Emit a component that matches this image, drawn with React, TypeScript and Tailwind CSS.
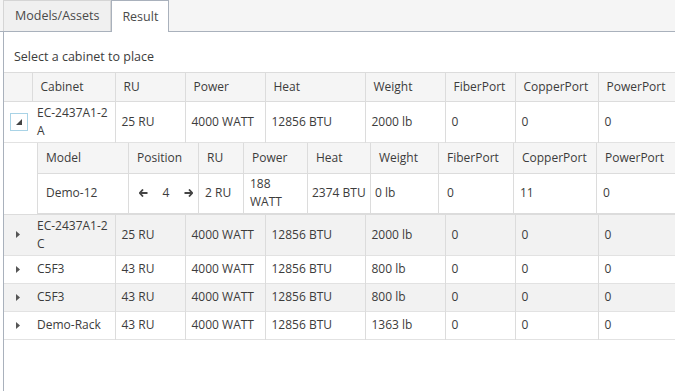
import React from "react";

type Cabinet = {
  name: React.ReactNode;
  ru: string;
  power: string;
  heat: string;
  weight: string;
  expanded?: boolean;
  tall?: boolean;
};

const cabinets: Cabinet[] = [
  { name: <>EC-2437A1-2<br />A</>, ru: "25 RU", power: "4000 WATT", heat: "12856 BTU", weight: "2000 lb", expanded: true, tall: true },
  { name: <>EC-2437A1-2<br />C</>, ru: "25 RU", power: "4000 WATT", heat: "12856 BTU", weight: "2000 lb", tall: true },
  { name: "C5F3", ru: "43 RU", power: "4000 WATT", heat: "12856 BTU", weight: "800 lb" },
  { name: "C5F3", ru: "43 RU", power: "4000 WATT", heat: "12856 BTU", weight: "800 lb" },
  { name: "Demo-Rack", ru: "43 RU", power: "4000 WATT", heat: "12856 BTU", weight: "1363 lb" },
];

const headers = ["Cabinet", "RU", "Power", "Heat", "Weight", "FiberPort", "CopperPort", "PowerPort"];
const nestedHeaders = ["Model", "Position", "RU", "Power", "Heat", "Weight", "FiberPort", "CopperPort", "PowerPort"];

const ArrowLeft = () => (
  <svg width="9" height="8" viewBox="0 0 9 8">
    <path d="M4 0.5 L0.8 4 L4 7.5 M1 4 H8.5" stroke="#444" strokeWidth="1.8" fill="none" />
  </svg>
);

const ArrowRight = () => (
  <svg width="9" height="8" viewBox="0 0 9 8">
    <path d="M5 0.5 L8.2 4 L5 7.5 M8 4 H0.5" stroke="#444" strokeWidth="1.8" fill="none" />
  </svg>
);

// collapse / expand triangles like kendo grid hierarchy cell
const Collapse = () => (
  <span className="flex h-[18px] w-[18px] items-center justify-center border border-[#a9d3e6] bg-white">
    <svg width="6" height="6" viewBox="0 0 6 6">
      <polygon points="6,0 6,6 0,6" fill="#444" />
    </svg>
  </span>
);

const Expand = () => (
  <svg width="4" height="7" viewBox="0 0 4 7">
    <polygon points="0,0 4,3.5 0,7" fill="#555" />
  </svg>
);

const App = () => {
  return (
    <div
      className="h-[391px] w-[675px] overflow-hidden bg-white text-[12px] text-[#3c3c3c]"
      style={{ fontFamily: '"Open Sans", "Noto Sans", sans-serif' }}
    >
      {/* tabs */}
      <div className="flex h-[32px] items-end border-b border-[#a9b1bc] bg-[#f5f5f5] pl-[3px] text-[12.5px]">
        <div className="h-[31px] border border-b-0 border-[#d5d5d5] bg-[#f0f0f0] px-[11px] leading-[30px] text-[#4a4a4a]">
          Models/Assets
        </div>
        <div className="relative -mb-px h-[32px] border border-b-0 border-[#a9b1bc] bg-white px-[10px] leading-[31px] text-[#4a4a4a]">
          Result
        </div>
      </div>

      <div className="ml-[3px] h-full border-l border-[#a9b1bc]">
        <div className="pl-[10px] pt-[16px] pb-[6px] text-[12.5px] leading-[18px]">Select a cabinet to place</div>

        <table className="w-[672px] table-fixed border-collapse">
          <colgroup>
            <col className="w-[28px]" />
            <col className="w-[83px]" />
            <col className="w-[70px]" />
            <col className="w-[80px]" />
            <col className="w-[100px]" />
            <col className="w-[80px]" />
            <col className="w-[70px]" />
            <col className="w-[83px]" />
            <col />
          </colgroup>
          <thead>
            <tr className="h-[29px] border-y border-[#dcdcdc] bg-[#f5f5f5]">
              <th className="p-0" />
              {headers.map((h) => (
                <th key={h} className="border-l border-[#dcdcdc] px-[8px] text-left font-normal">
                  {h}
                </th>
              ))}
            </tr>
          </thead>
          <tbody>
            {cabinets.map((c, i) => (
              <React.Fragment key={i}>
                <tr className={`border-b border-[#e2e2e2] ${i % 2 === 1 ? "bg-[#f2f2f2]" : "bg-white"} ${c.tall ? "h-[41px]" : "h-[28px]"}`}>
                  <td className="p-0">
                    <div className={`flex items-center ${c.expanded ? "pl-[6px]" : "pl-[12px]"}`}>
                      {c.expanded ? <Collapse /> : <Expand />}
                    </div>
                  </td>
                  <td className="px-[5px] leading-[18px]">{c.name}</td>
                  <td className="border-l border-[#dcdcdc] px-[6px]">{c.ru}</td>
                  <td className="border-l border-[#dcdcdc] px-[6px]">{c.power}</td>
                  <td className="border-l border-[#dcdcdc] px-[6px]">{c.heat}</td>
                  <td className="border-l border-[#dcdcdc] px-[6px]">{c.weight}</td>
                  <td className="border-l border-[#dcdcdc] px-[6px]">0</td>
                  <td className="border-l border-[#dcdcdc] px-[6px]">0</td>
                  <td className="border-l border-[#dcdcdc] px-[6px]">0</td>
                </tr>
                {c.expanded && (
                  <tr className="border-b border-[#dcdcdc]">
                    <td colSpan={9} className="p-0">
                      <div className="flex pl-[33px]">
                        <table className="w-[638px] table-fixed border-collapse border-b border-l border-[#dcdcdc]">
                          <colgroup>
                            <col className="w-[91px]" />
                            <col className="w-[70px]" />
                            <col className="w-[45px]" />
                            <col className="w-[64px]" />
                            <col className="w-[63px]" />
                            <col className="w-[68px]" />
                            <col className="w-[75px]" />
                            <col className="w-[83px]" />
                            <col />
                          </colgroup>
                          <thead>
                            <tr className="h-[30px] border-b border-[#dcdcdc] bg-[#f5f5f5]">
                              {nestedHeaders.map((h, j) => (
                                <th
                                  key={h}
                                  className={`px-[8px] text-left font-normal ${j > 0 ? "border-l border-[#dcdcdc]" : ""}`}
                                >
                                  {h}
                                </th>
                              ))}
                            </tr>
                          </thead>
                          <tbody>
                            <tr className="h-[40px]">
                              <td className="px-[8px]">Demo-12</td>
                              <td className="border-l border-[#dcdcdc] pl-[10px] pr-[5px]">
                                <div className="flex items-center justify-between">
                                  <ArrowLeft />
                                  <span>4</span>
                                  <ArrowRight />
                                </div>
                              </td>
                              <td className="border-l border-[#dcdcdc] px-[6px]">2 RU</td>
                              <td className="border-l border-[#dcdcdc] px-[6px] leading-[18px]">
                                188
                                <br />
                                WATT
                              </td>
                              <td className="border-l border-[#dcdcdc] px-[4px] whitespace-nowrap">2374 BTU</td>
                              <td className="border-l border-[#dcdcdc] px-[4px]">0 lb</td>
                              <td className="border-l border-[#dcdcdc] px-[8px]">0</td>
                              <td className="border-l border-[#dcdcdc] px-[6px]">11</td>
                              <td className="border-l border-[#dcdcdc] px-[6px]">0</td>
                            </tr>
                          </tbody>
                        </table>
                      </div>
                    </td>
                  </tr>
                )}
              </React.Fragment>
            ))}
          </tbody>
        </table>
      </div>
    </div>
  );
};

export default App;
